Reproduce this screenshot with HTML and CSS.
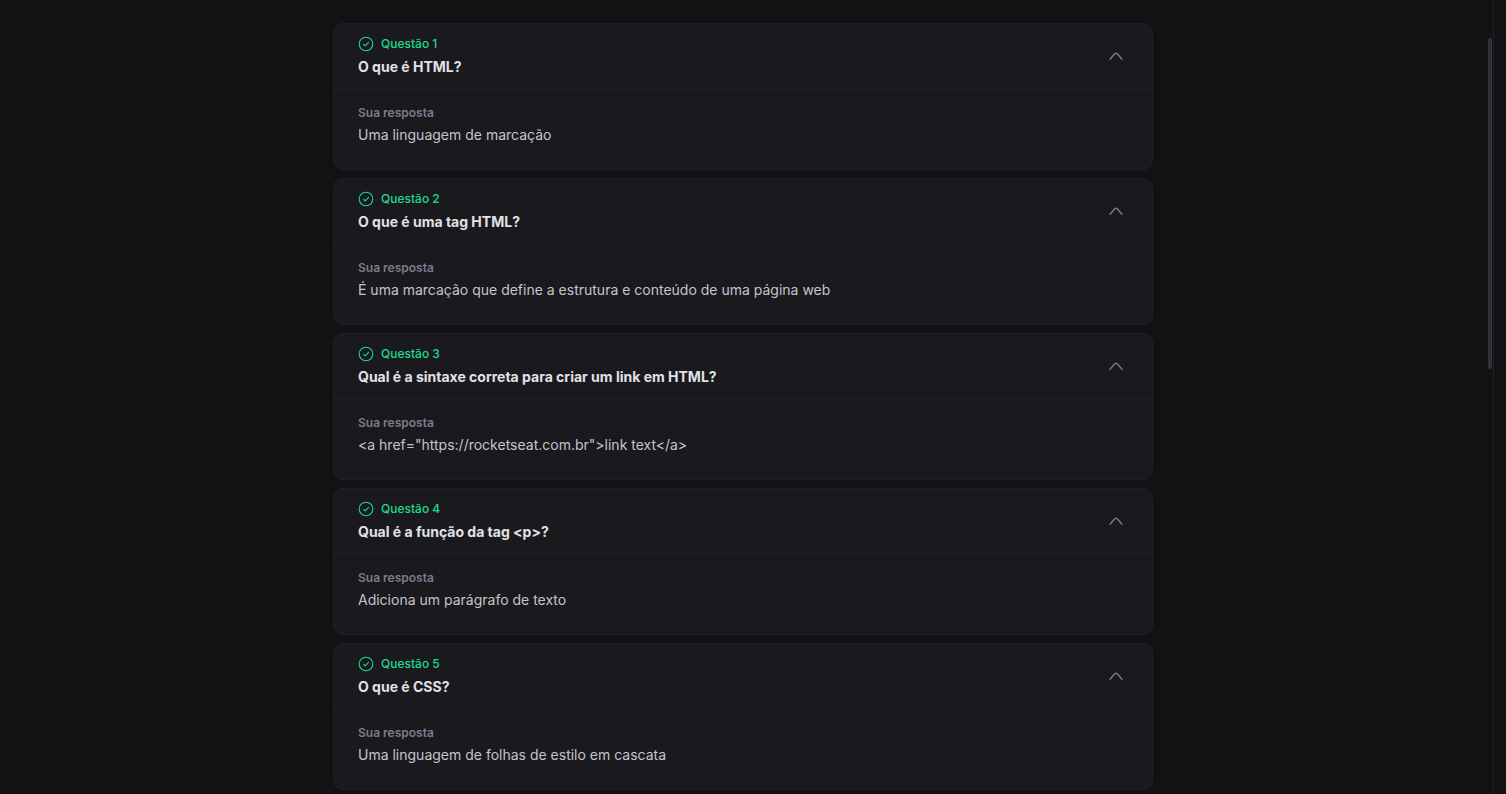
FILE: index.html
```
<!DOCTYPE html>
<html lang="pt-BR">
<head>
<meta charset="utf-8">
<meta name="viewport" content="width=device-width, initial-scale=1">
<title>Questões</title>
<link rel="stylesheet" href="styles.css">
</head>
<body>
<svg class="defs" aria-hidden="true">
  <symbol id="check" viewBox="0 0 16 16"><circle cx="8" cy="8" r="6.8"/><path d="M5.6 8.3 7.2 9.8 10.6 6.4"/></symbol>
  <symbol id="caret" viewBox="0 0 16 16"><path d="M2 9.2 6.8 3.7Q8 2.6 9.2 3.7L14 9.2"/></symbol>
</svg>
<div class="app">
  <main class="content">
    <div class="list">
      <article class="card">
        <button class="header" type="button" aria-expanded="true">
          <span class="heading"><span class="status"><svg class="check"><use href="#check"/></svg>Questão 1</span><span class="title">O que é HTML?</span></span>
          <svg class="caret"><use href="#caret"/></svg>
        </button>
        <div class="body"><p class="label">Sua resposta</p><p class="answer">Uma linguagem de marcação</p></div>
      </article>
      <article class="card">
        <button class="header" type="button" aria-expanded="true">
          <span class="heading"><span class="status"><svg class="check"><use href="#check"/></svg>Questão 2</span><span class="title">O que é uma tag HTML?</span></span>
          <svg class="caret"><use href="#caret"/></svg>
        </button>
        <div class="body"><p class="label">Sua resposta</p><p class="answer">É uma marcação que define a estrutura e conteúdo de uma página web</p></div>
      </article>
      <article class="card">
        <button class="header" type="button" aria-expanded="true">
          <span class="heading"><span class="status"><svg class="check"><use href="#check"/></svg>Questão 3</span><span class="title">Qual é a sintaxe correta para criar um link em HTML?</span></span>
          <svg class="caret"><use href="#caret"/></svg>
        </button>
        <div class="body"><p class="label">Sua resposta</p><p class="answer">&lt;a href="https://rocketseat.com.br"&gt;link text&lt;/a&gt;</p></div>
      </article>
      <article class="card">
        <button class="header" type="button" aria-expanded="true">
          <span class="heading"><span class="status"><svg class="check"><use href="#check"/></svg>Questão 4</span><span class="title">Qual é a função da tag &lt;p&gt;?</span></span>
          <svg class="caret"><use href="#caret"/></svg>
        </button>
        <div class="body"><p class="label">Sua resposta</p><p class="answer">Adiciona um parágrafo de texto</p></div>
      </article>
      <article class="card">
        <button class="header" type="button" aria-expanded="true">
          <span class="heading"><span class="status"><svg class="check"><use href="#check"/></svg>Questão 5</span><span class="title">O que é CSS?</span></span>
          <svg class="caret"><use href="#caret"/></svg>
        </button>
        <div class="body"><p class="label">Sua resposta</p><p class="answer">Uma linguagem de folhas de estilo em cascata</p></div>
      </article>
    </div>
  </main>
  <div class="track"><div class="thumb"></div></div>
</div>
</body>
</html>
```
FILE: styles.css
```
* {
  box-sizing: border-box;
}

body {
  margin: 0;
  background: #121214;
  color: #c4c4cc;
  font-family: Inter, sans-serif;
  overflow: hidden;
}

p {
  margin: 0;
}

.defs {
  position: absolute;
  width: 0;
  height: 0;
}

.app {
  display: flex;
  height: 100vh;
  padding-right: 12px;
}

.content {
  flex: 1;
  min-width: 0;
  padding-top: 23px;
  overflow: hidden;
}

.list {
  display: grid;
  gap: 8px;
  max-width: 820px;
  margin: 0 auto;
}

.card {
  border: 1px solid #202024;
  border-radius: 10px;
  background: #1a1a1e;
  overflow: hidden;
}

.header {
  display: flex;
  align-items: center;
  justify-content: space-between;
  width: 100%;
  padding: 12px 28px 9px 24px;
  border: 0;
  border-bottom: 1px solid #202024;
  background: transparent;
  font-family: inherit;
  text-align: left;
  cursor: pointer;
}

.heading {
  display: grid;
  gap: 3px;
}

.status {
  display: flex;
  align-items: center;
  gap: 7px;
  color: #1bd990;
  font-size: 12px;
  font-weight: 500;
  line-height: 16px;
}

.title {
  color: #e1e1e6;
  font-size: 14px;
  font-weight: 700;
  line-height: 24px;
}

.check,
.caret {
  width: 16px;
  height: 16px;
  fill: none;
  stroke: currentColor;
  stroke-width: 1.1;
  stroke-linecap: round;
  stroke-linejoin: round;
}

.caret {
  color: #7c7c8a;
  stroke-width: 1.4;
}

.body {
  padding: 16px 24px 22px;
}

.label {
  margin-bottom: 2px;
  color: #7c7c8a;
  font-size: 12px;
  font-weight: 600;
  line-height: 16px;
}

.answer {
  font-size: 14px;
  line-height: 24px;
}

.track {
  display: flex;
  justify-content: flex-end;
  width: 8px;
  padding-top: 38px;
  border-right: 1px solid #202024;
}

.thumb {
  width: 4px;
  height: calc(42vh - 2px);
  margin-right: 1px;
  border-radius: 2px;
  background: #323238;
}
```
